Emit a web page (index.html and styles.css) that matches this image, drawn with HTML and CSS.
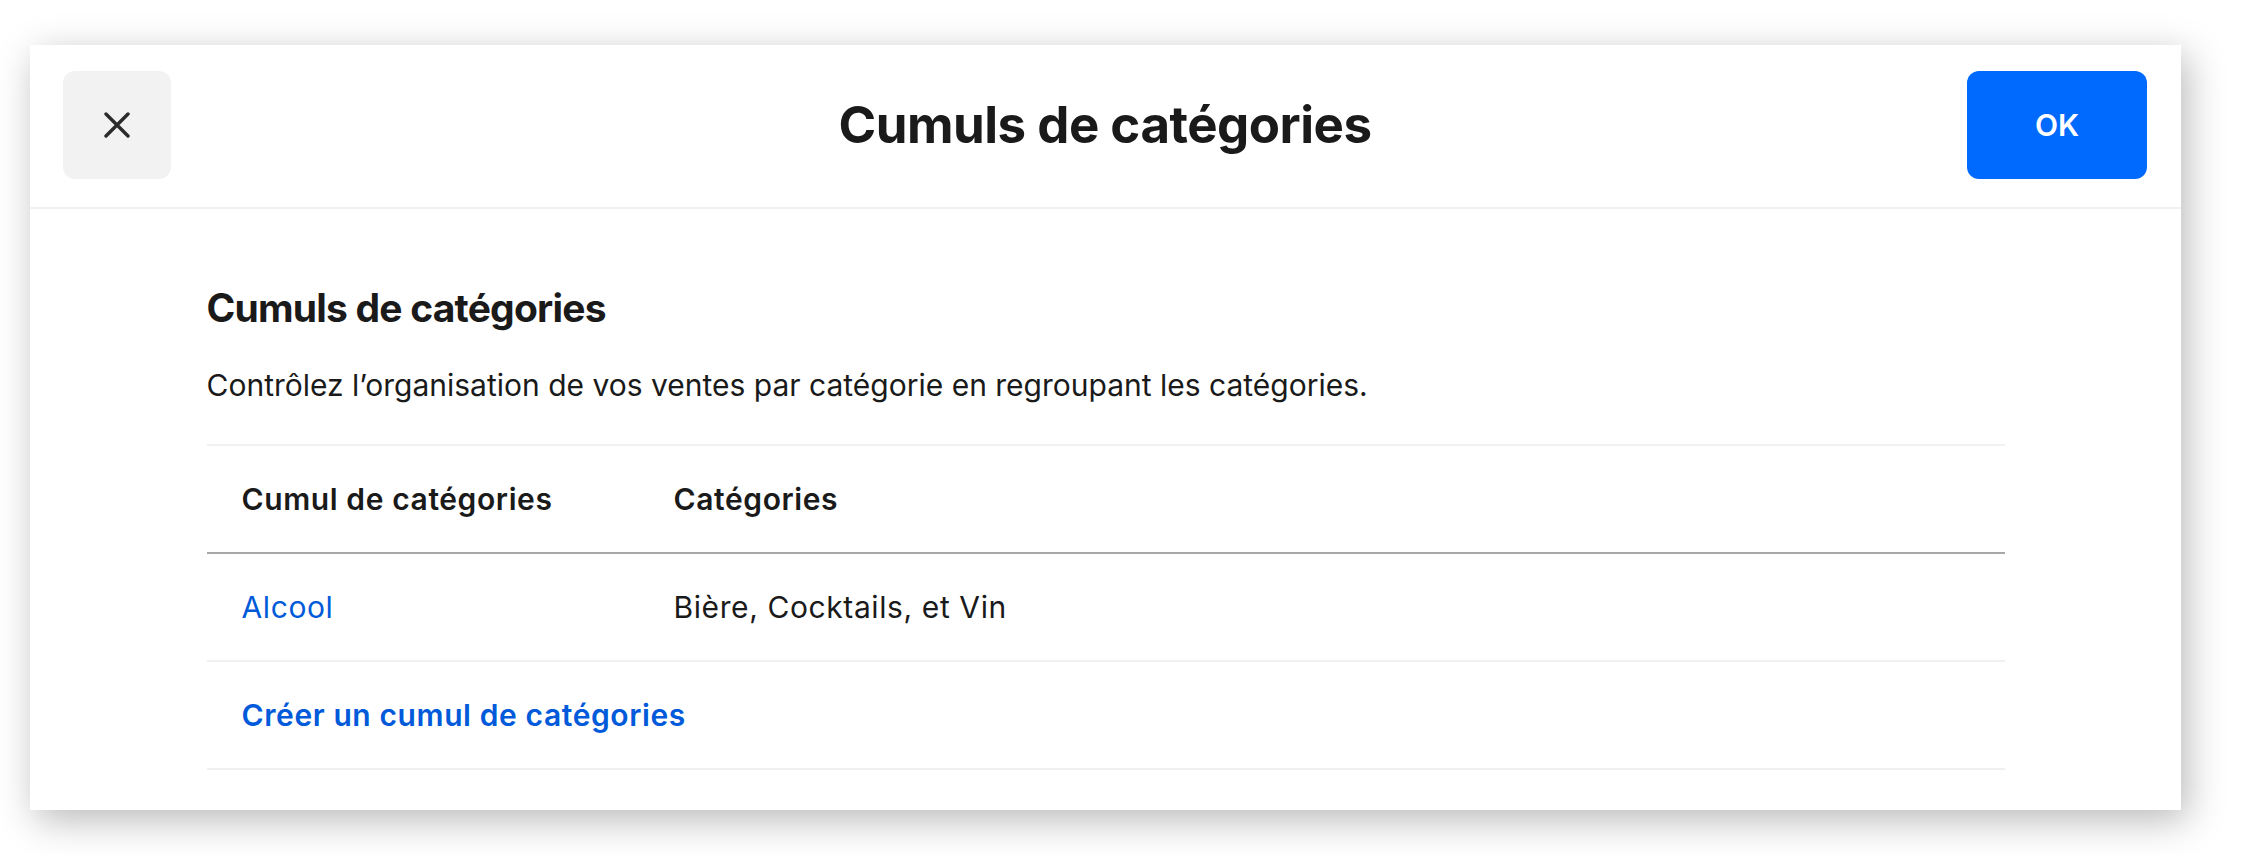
FILE: index.html
```html
<!DOCTYPE html>
<html lang="fr">
<head>
    <meta charset="UTF-8">
    <meta name="viewport" content="width=device-width, initial-scale=1.0">
    <title>Cumuls de catégories</title>
    <link rel="stylesheet" href="styles.css">
</head>
<body>
    <div class="modal">
        <header class="modal-header">
            <button class="btn-close" aria-label="Fermer">
                <svg width="26" height="26" viewBox="0 0 26 26">
                    <path d="M2 2 L24 24 M24 2 L2 24" stroke="#2b2b2b" stroke-width="3.4" stroke-linecap="round" fill="none"/>
                </svg>
            </button>
            <h1>Cumuls de catégories</h1>
            <button class="btn-ok">OK</button>
        </header>

        <div class="content">
            <h2>Cumuls de catégories</h2>
            <p class="intro">Contrôlez l’organisation de vos ventes par catégorie en regroupant les catégories.</p>

            <div class="table">
                <div class="row head">
                    <div>Cumul de catégories</div>
                    <div>Catégories</div>
                </div>
                <div class="row">
                    <div><a href="#">Alcool</a></div>
                    <div>Bière, Cocktails, et Vin</div>
                </div>
                <div class="row">
                    <div class="create"><a href="#">Créer un cumul de catégories</a></div>
                </div>
            </div>
        </div>
    </div>
</body>
</html>
```

FILE: styles.css
```css
body {
    font-family: 'Inter', 'Noto Sans', sans-serif;
    background-color: #fff;
    color: #1a1a1a;
    margin: 0;
    padding: 45px 60px 45px 30px;
}
.modal {
    background-color: #fff;
    box-shadow: 6px 10px 36px rgba(0,0,0,0.28);
}
.modal-header {
    display: grid;
    grid-template-columns: 180px 1fr 180px;
    align-items: center;
    padding: 26px 34px 28px 33px;
    border-bottom: 2px solid #f2f2f2;
}
.modal-header h1 {
    margin: 0;
    text-align: center;
    font-size: 51px;
    font-weight: 700;
    letter-spacing: -0.5px;
    line-height: 60px;
}
.btn-close,
.btn-ok {
    height: 108px;
    border: none;
    border-radius: 12px;
    cursor: pointer;
    font-family: inherit;
}
.btn-close {
    width: 108px;
    background-color: #f2f2f2;
    display: flex;
    align-items: center;
    justify-content: center;
    padding: 0;
}
.btn-ok {
    background-color: #006aff;
    color: #fff;
    font-size: 30px;
    font-weight: 600;
}
.content {
    max-width: 1798px;
    margin: 0 auto;
    padding: 75px 0 40px;
}
h2 {
    margin: 0;
    font-size: 39px;
    font-weight: 700;
    line-height: 48px;
    letter-spacing: -0.8px;
}
.intro {
    margin: 33px 0 0;
    font-size: 30px;
    line-height: 40px;
}
.table {
    margin-top: 39px;
    border-top: 2px solid #f2f2f2;
    font-size: 30px;
    line-height: 40px;
    letter-spacing: 0.6px;
}
.row {
    display: grid;
    grid-template-columns: 432px 1fr;
    padding: 33px 35px;
    border-bottom: 2px solid #f0f0f0;
}
.row.head {
    font-weight: 600;
    border-bottom-color: #a8a8a8;
}
.row a {
    color: #005ad9;
    text-decoration: none;
}
.create {
    grid-column: 1 / -1;
    font-weight: 600;
}
```
